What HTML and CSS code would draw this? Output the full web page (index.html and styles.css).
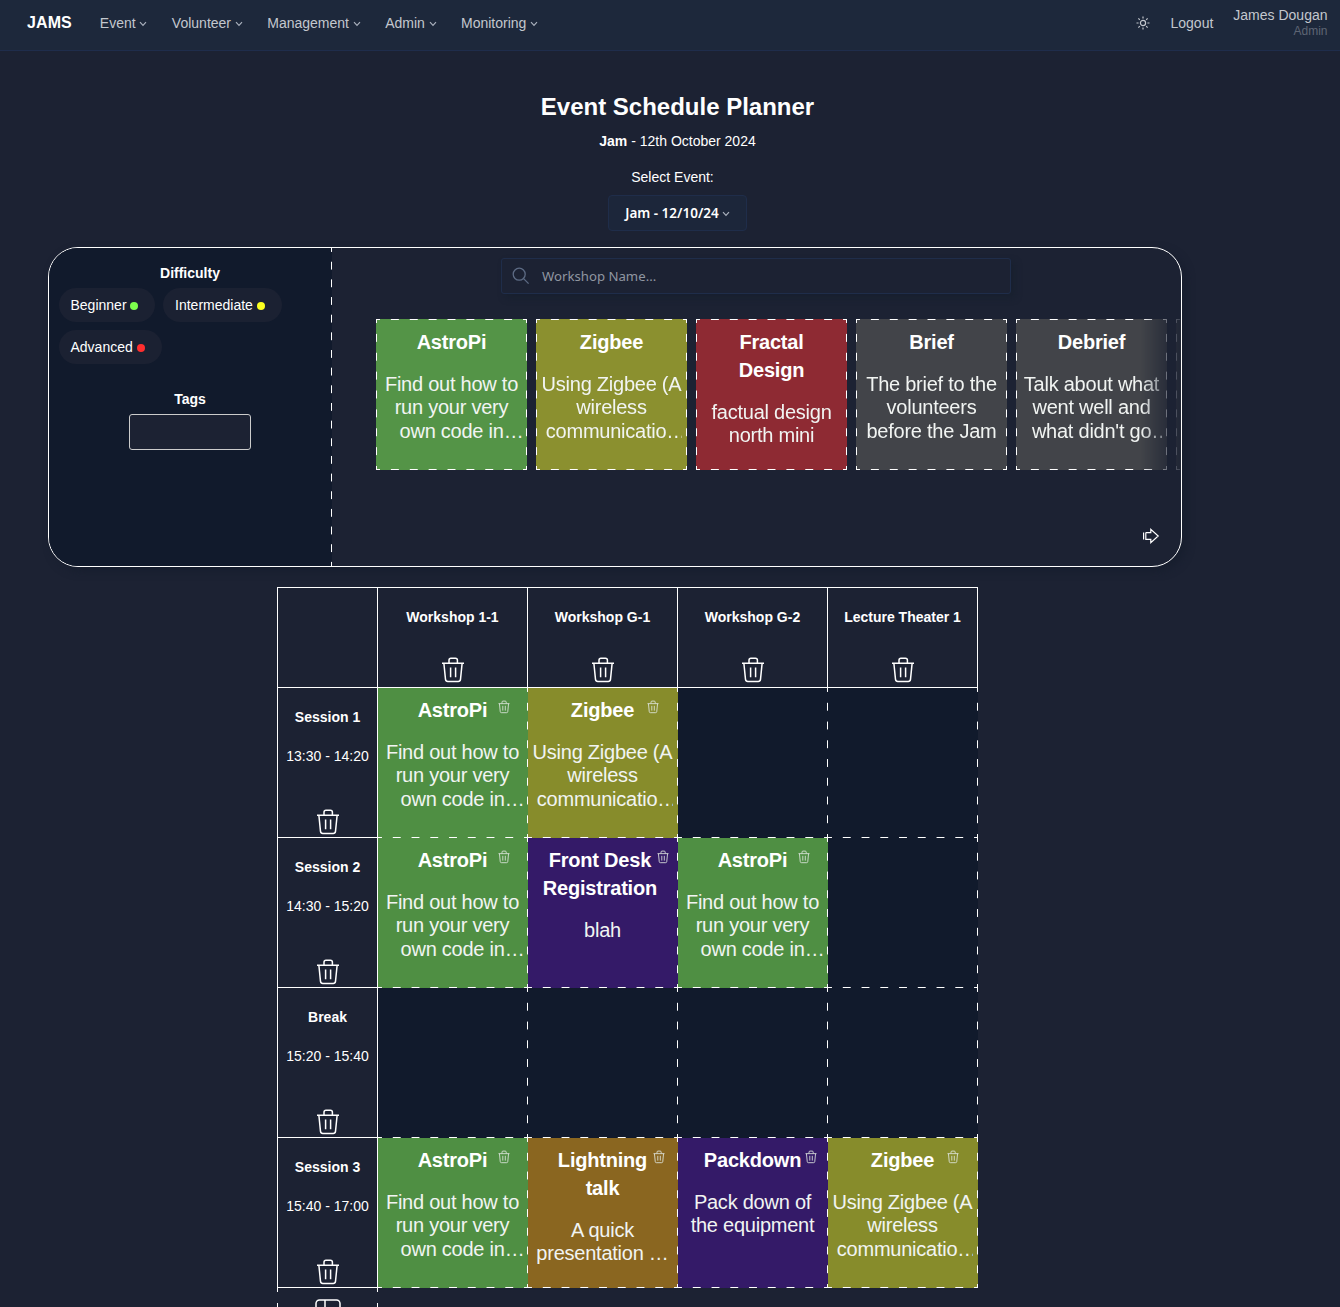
FILE: index.html
```html
<!DOCTYPE html>
<html lang="en">
<head>
<meta charset="utf-8">
<title>JAMS - Event Schedule Planner</title>
<link rel="stylesheet" href="styles.css">
</head>
<body>
<svg class="defs" aria-hidden="true">
  <symbol id="trash" viewBox="0 0 24 28">
    <path d="M1 7.3H23M8 7V4.2Q8 2.2 10 2.2H14.4Q16.4 2.2 16.4 4.2V7M2.9 7.5L4.5 23.3Q4.8 25.4 6.8 25.4H17.2Q19.2 25.4 19.5 23.3L21.1 7.5M9.6 11.6V21.2M14.6 11.6V21.2"/>
  </symbol>
  <symbol id="chevron" viewBox="0 0 8 6"><path d="M1 1.2L4 4.4L7 1.2"/></symbol>
</svg>

<nav class="navbar">
  <a class="brand">JAMS</a>
  <div class="menu">
    <a class="menu-item">Event<svg class="chevron"><use href="#chevron"/></svg></a>
    <a class="menu-item">Volunteer<svg class="chevron"><use href="#chevron"/></svg></a>
    <a class="menu-item">Management<svg class="chevron"><use href="#chevron"/></svg></a>
    <a class="menu-item">Admin<svg class="chevron"><use href="#chevron"/></svg></a>
    <a class="menu-item">Monitoring<svg class="chevron"><use href="#chevron"/></svg></a>
  </div>
  <svg class="sun" viewBox="0 0 14 14"><circle cx="7" cy="7" r="2.6"/><path d="M7 .5V2.6M7 11.4V13.5M.5 7H2.6M11.4 7H13.5M2.4 2.4L3.8 3.8M10.2 10.2L11.6 11.6M2.4 11.6L3.8 10.2M10.2 3.8L11.6 2.4"/></svg>
  <a class="logout">Logout</a>
  <div class="user"><span>James Dougan</span><small>Admin</small></div>
</nav>

<header class="heading">
  <h1>Event Schedule Planner</h1>
  <p class="event-name"><b>Jam</b> - 12th October 2024</p>
  <label class="select-label">Select Event:</label>
  <button class="select">Jam - 12/10/24<svg class="chevron"><use href="#chevron"/></svg></button>
</header>

<section class="picker">
  <aside class="filters">
    <h2>Difficulty</h2>
    <div class="pills">
      <span class="pill">Beginner<i class="dot easy"></i></span>
      <span class="pill wide">Intermediate<i class="dot medium"></i></span>
      <span class="pill">Advanced<i class="dot hard"></i></span>
    </div>
    <h2 class="tags-title">Tags</h2>
    <div class="tags-box"></div>
  </aside>
  <div class="library">
    <div class="search">
      <svg viewBox="0 0 18 18"><circle cx="7.2" cy="7.2" r="6"/><path d="M11.6 11.6L16.6 16.6"/></svg>
      <span>Workshop Name...</span>
    </div>
    <div class="track">
      <article class="card green"><h3>AstroPi</h3><p>Find out how to<br>run your very<br>own code in<span class="more full">…</span></p></article>
      <article class="card olive"><h3>Zigbee</h3><p>Using Zigbee (A<br>wireless<br>communicatio<span class="more">…</span></p></article>
      <article class="card red"><h3>Fractal<br>Design</h3><p>factual design<br>north mini</p></article>
      <article class="card grey"><h3>Brief</h3><p>The brief to the<br>volunteers<br>before the Jam</p></article>
      <article class="card grey"><h3>Debrief</h3><p>Talk about what<br>went well and<br>what didn't go<span class="more full">…</span></p></article>
      <article class="card grey"></article>
    </div>
    <svg class="next" viewBox="0 0 18 16"><path d="M1.6 4.6V11.4M3.8 4.6V11.4H8.8V14.6L16.2 8L8.8 1.4V4.6H3.8"/></svg>
  </div>
</section>

<table class="schedule">
  <colgroup><col class="times"><col><col><col><col></colgroup>
  <tr class="rooms">
    <th></th>
    <th><div class="head"><b>Workshop 1-1</b><svg class="bin"><use href="#trash"/></svg></div></th>
    <th><div class="head"><b>Workshop G-1</b><svg class="bin"><use href="#trash"/></svg></div></th>
    <th><div class="head"><b>Workshop G-2</b><svg class="bin"><use href="#trash"/></svg></div></th>
    <th><div class="head"><b>Lecture Theater 1</b><svg class="bin"><use href="#trash"/></svg></div></th>
  </tr>
  <tr>
    <th><div class="head"><b>Session 1</b><span>13:30 - 14:20</span><svg class="bin"><use href="#trash"/></svg></div></th>
    <td class="green"><div class="slot"><h3><span>AstroPi</span><svg><use href="#trash"/></svg></h3><p>Find out how to<br>run your very<br>own code in<span class="more full">…</span></p></div></td>
    <td class="olive"><div class="slot"><h3><span>Zigbee</span><svg><use href="#trash"/></svg></h3><p>Using Zigbee (A<br>wireless<br>communicatio<span class="more">…</span></p></div></td>
    <td></td>
    <td></td>
  </tr>
  <tr>
    <th><div class="head"><b>Session 2</b><span>14:30 - 15:20</span><svg class="bin"><use href="#trash"/></svg></div></th>
    <td class="green"><div class="slot"><h3><span>AstroPi</span><svg><use href="#trash"/></svg></h3><p>Find out how to<br>run your very<br>own code in<span class="more full">…</span></p></div></td>
    <td class="purple"><div class="slot tight"><h3><span>Front Desk<br>Registration</span><svg><use href="#trash"/></svg></h3><p>blah</p></div></td>
    <td class="green"><div class="slot"><h3><span>AstroPi</span><svg><use href="#trash"/></svg></h3><p>Find out how to<br>run your very<br>own code in<span class="more full">…</span></p></div></td>
    <td></td>
  </tr>
  <tr>
    <th><div class="head"><b>Break</b><span>15:20 - 15:40</span><svg class="bin"><use href="#trash"/></svg></div></th>
    <td></td>
    <td></td>
    <td></td>
    <td></td>
  </tr>
  <tr>
    <th><div class="head"><b>Session 3</b><span>15:40 - 17:00</span><svg class="bin"><use href="#trash"/></svg></div></th>
    <td class="green"><div class="slot"><h3><span>AstroPi</span><svg><use href="#trash"/></svg></h3><p>Find out how to<br>run your very<br>own code in<span class="more full">…</span></p></div></td>
    <td class="brown"><div class="slot"><h3><span>Lightning<br>talk</span><svg><use href="#trash"/></svg></h3><p>A quick<br>presentation …</p></div></td>
    <td class="purple"><div class="slot"><h3><span>Packdown</span><svg><use href="#trash"/></svg></h3><p>Pack down of<br>the equipment</p></div></td>
    <td class="olive"><div class="slot"><h3><span>Zigbee</span><svg><use href="#trash"/></svg></h3><p>Using Zigbee (A<br>wireless<br>communicatio<span class="more">…</span></p></div></td>
  </tr>
  <tr class="add-row">
    <th class="add"><div><svg viewBox="0 0 26 26"><rect x="1" y="1" width="24" height="24" rx="3.5"/><path d="M10 1V25M1 9H25"/></svg></div></th>
  </tr>
</table>
</body>
</html>
```
FILE: styles.css
```css
* { box-sizing: border-box; }
:root {
  --dash-x: linear-gradient(to right, #fff 4px, transparent 4px, transparent calc(100% - 4px), #fff calc(100% - 4px));
  --dash-y: linear-gradient(to bottom, #fff 4px, transparent 4px, transparent calc(100% - 4px), #fff calc(100% - 4px));
}
html { overflow: hidden; }
body {
  margin: 0;
  height: 1307px;
  overflow: hidden;
  background: #1c2233;
  color: #fff;
  font: 14px/20px "Liberation Sans", Arial, sans-serif;
}
h1, h2, h3, p { margin: 0; }
svg { fill: none; stroke: currentColor; display: block; }
.defs { position: absolute; width: 0; height: 0; }
.chevron { width: 8px; height: 6px; stroke-width: 1.2; color: #a9b0bc; }

.navbar {
  display: flex;
  align-items: center;
  height: 51px;
  padding: 0 12.5px 5px 27px;
  background: #1d283b;
  border-bottom: 1px solid #1f2d4c;
  color: #c3c7ce;
}
.brand { font-size: 16px; font-weight: bold; color: #fff; margin-right: 28px; letter-spacing: .1px; }
.menu { display: flex; gap: 24.5px; margin-right: auto; }
.menu-item { display: flex; align-items: center; gap: 3.7px; }
.menu-item .chevron { margin-top: 2px; }
.sun { width: 14px; height: 14px; margin-right: 21px; stroke-width: 1.2; margin-top: 1px; }
.logout { margin-right: 20px; }
.user { display: flex; flex-direction: column; align-items: flex-end; line-height: 16px; }
.user small { font-size: 12px; color: #5d6574; line-height: 17px; margin-bottom: -1px; }

.heading { display: flex; flex-direction: column; align-items: center; padding-left: 15px; height: 196px; }
.heading h1 { font-size: 24px; line-height: 32px; margin-top: 40px; }
.event-name { margin-top: 8px; }
.select-label { margin: 16px 10px 0 0; }
.select {
  display: flex;
  align-items: center;
  justify-content: center;
  gap: 3px;
  width: 139px;
  height: 36px;
  margin-top: 8px;
  padding: 0;
  border: 1px solid #1f2d4a;
  border-radius: 4px;
  background: #1c263a;
  color: #fff;
  font: 600 13.5px "Noto Sans", sans-serif;
}
.select .chevron { margin-top: 1px; }

.picker {
  display: flex;
  width: 1134px;
  height: 320px;
  margin-left: 48px;
  border: 1px solid #fff;
  border-radius: 30px;
  overflow: hidden;
  box-shadow: 4px 4px 8px #171e2e;
}
.filters { width: 283px; padding: 15px 11px 15px 10px; background: var(--dash-y) right top / 1px 5.5556% repeat-y #111a2c; }
.filters h2 { font-size: 14px; line-height: 20px; text-align: center; }
.pills { display: flex; flex-wrap: wrap; gap: 8px; margin-top: 5px; }
.pill { display: flex; align-items: center; height: 34px; padding: 0 17px 0 11.5px; border-radius: 17px; background: #1b2132; }
.pill.wide { padding-left: 12.5px; }
.dot { width: 8px; height: 8px; border-radius: 50%; margin: 2px 0 0 3px; }
.easy { background: #7dff4d; }
.medium { background: #fbff1f; margin-left: 4px; }
.hard { background: #ff2e2e; margin-left: 4px; }
.filters .tags-title { margin-top: 25px; }
.tags-box { width: 122px; height: 36px; margin: 5px auto 0; border: 1px solid #ccc; border-radius: 3px; background: #1c2233; }

.library { flex: 1; min-width: 0; display: flex; flex-direction: column; padding: 10px 0 0 44px; }
.search {
  display: flex;
  align-items: center;
  gap: 12px;
  width: 510px;
  height: 36px;
  margin-left: 125px;
  padding-left: 10px;
  border: 1px solid #1f2d4a;
  border-radius: 3px;
  box-shadow: 4px 4px 6px #18202f;
  color: #9096a1;
  font: 13.2px "Noto Sans", sans-serif;
}
.search svg { width: 18px; height: 18px; stroke: #5d6b84; stroke-width: 1.3; }
.track {
  display: flex;
  gap: 9px;
  margin-top: 25px;
  overflow: hidden;
  -webkit-mask-image: linear-gradient(to right, #000 calc(100% - 40px), rgba(0,0,0,.35) calc(100% - 14px), rgba(0,0,0,.15));
  mask-image: linear-gradient(to right, #000 calc(100% - 40px), rgba(0,0,0,.35) calc(100% - 14px), rgba(0,0,0,.15));
}
.card {
  flex: none;
  width: 151px;
  height: 151px;
  padding: 9px 5px;
  text-align: center;
  background-image: var(--dash-x), var(--dash-x), var(--dash-y), var(--dash-y);
  background-position: left top, left bottom, left top, right top;
  background-size: 12.5% 1px, 12.5% 1px, 1px 12.5%, 1px 12.5%;
  background-repeat: repeat-x, repeat-x, repeat-y, repeat-y;
}
.card h3, .slot h3 { font-size: 20px; line-height: 28px; letter-spacing: -.2px; }
.card p, .slot p {
  margin-top: 16.5px;
  font-size: 20px;
  line-height: 23.5px;
  letter-spacing: -.24px;
  overflow: hidden;
  white-space: nowrap;
  color: #f1f4f2;
}
.more { margin-right: -9px; }
.more.full { margin-right: -20px; }
.next { width: 18px; height: 16px; margin: 58px 21px 0 auto; stroke-width: 1.2; }

.green { background-color: #549447; }
.olive { background-color: #8b902f; }
.red { background-color: #8e2a33; }
.grey { background-color: #424449; }

.schedule { width: 701px; margin: 20px 0 0 277px; table-layout: fixed; border-collapse: separate; border-spacing: 0; }
.schedule col { width: 150px; }
.schedule .times { width: 101px; }
.schedule tr { height: 150px; }
.schedule .rooms { height: 101px; }
.schedule .add-row { height: 19px; }
.schedule th, .schedule td { padding: 0; vertical-align: top; font-weight: normal; }
.schedule th { border: solid #fff; border-width: 0 1px 1px 0; }
.schedule th:first-child { border-left-width: 1px; }
.schedule .rooms th { border-top-width: 1px; }
.schedule td {
  background: var(--dash-x) left bottom / 12.5% 1px repeat-x, var(--dash-y) right top / 1px 12.5% repeat-y;
  background-color: #111a2c;
}
.schedule td.green { background-color: #4f8f43; }
.schedule td.olive { background-color: #878c2b; }
.schedule td.purple { background-color: #341a68; }
.schedule td.brown { background-color: #8a6620; }
.head { display: flex; flex-direction: column; align-items: center; height: 149px; padding: 19px 0 1px; }
.rooms .head { height: 99px; padding-bottom: 3px; }
.head span { margin-top: 19px; }
.bin { width: 24px; height: 28px; margin-top: auto; stroke-width: 1.5; }
.slot { height: 149px; padding: 8px 5px 0 4px; text-align: center; }
.slot h3 { display: grid; grid-template-columns: 1fr auto 1fr; }
.slot h3 span { grid-column: 2; }
.slot h3 svg { width: 12px; height: 14px; margin: 4px 2px 0 0; justify-self: center; stroke-width: 1.7; color: #dfe6df; }
.tight h3 { margin: 0 2px 0 -2px; }
.schedule .add {
  border: 0;
  background: var(--dash-y) left top / 1px 18.75px repeat-y, var(--dash-y) right top / 1px 18.75px repeat-y;
}
.add div { height: 19px; padding-top: 11px; overflow: hidden; }
.add svg { width: 26px; height: 26px; margin: 0 auto; stroke-width: 1.5; }
```
